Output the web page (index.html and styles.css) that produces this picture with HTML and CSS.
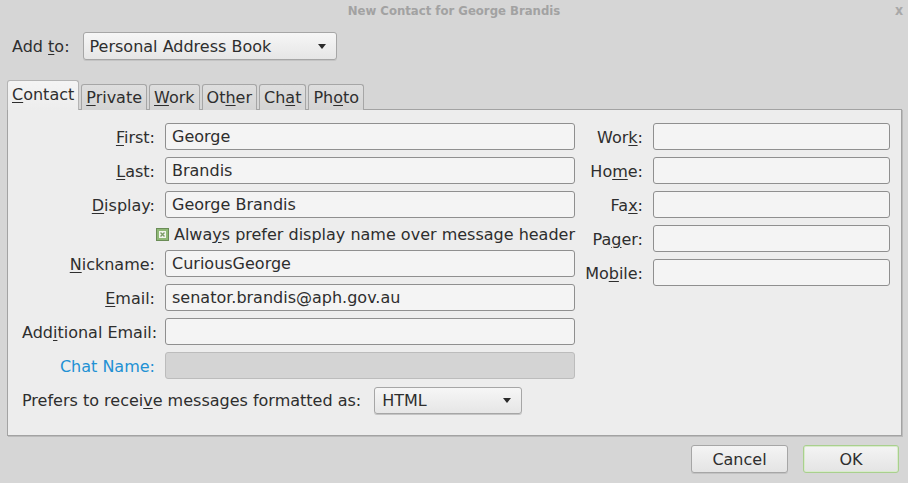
FILE: index.html
```html
<!DOCTYPE html>
<html lang="en">
<head>
    <meta charset="UTF-8">
    <title>New Contact for George Brandis</title>
    <link rel="stylesheet" href="styles.css">
</head>
<body>
    <div class="window">
        <div class="titlebar">
            <span></span>
            <span class="title">New Contact for George Brandis</span>
            <span class="close">x</span>
        </div>

        <div class="addto">
            <label>Add <u>t</u>o:</label>
            <div class="select book">
                <span>Personal Address Book</span>
                <span class="arrow"></span>
            </div>
        </div>

        <div class="tabs">
            <div class="tab active"><u>C</u>ontact</div>
            <div class="tab"><u>P</u>rivate</div>
            <div class="tab"><u>W</u>ork</div>
            <div class="tab">Ot<u>h</u>er</div>
            <div class="tab">Ch<u>a</u>t</div>
            <div class="tab">Ph<u>o</u>to</div>
        </div>

        <div class="panel">
            <div class="columns">
                <div class="grid names">
                    <label><u>F</u>irst:</label>
                    <div class="input">George</div>
                    <label><u>L</u>ast:</label>
                    <div class="input">Brandis</div>
                    <label><u>D</u>isplay:</label>
                    <div class="input">George Brandis</div>
                    <div class="check">
                        <svg width="13" height="13" viewBox="0 0 13 13">
                            <rect x="0.5" y="0.5" width="12" height="12" fill="#8fb876" stroke="#6a8c56"/>
                            <rect x="3" y="3" width="7" height="7" fill="#f2f5ee"/>
                            <path d="M4.5 4.5 L8.5 8.5 M8.5 4.5 L4.5 8.5" stroke="#7a9a66" stroke-width="1.4"/>
                        </svg>
                        <span>Alwa<u>y</u>s prefer display name over message header</span>
                    </div>
                    <label><u>N</u>ickname:</label>
                    <div class="input">CuriousGeorge</div>
                    <label><u>E</u>mail:</label>
                    <div class="input">senator.brandis@aph.gov.au</div>
                    <label>Add<u>i</u>tional Email:</label>
                    <div class="input"></div>
                    <label class="disabled">Chat Name:</label>
                    <div class="input off"></div>
                </div>

                <div class="grid phones">
                    <label>Wor<u>k</u>:</label>
                    <div class="input"></div>
                    <label>Ho<u>m</u>e:</label>
                    <div class="input"></div>
                    <label>Fa<u>x</u>:</label>
                    <div class="input"></div>
                    <label>Pa<u>g</u>er:</label>
                    <div class="input"></div>
                    <label>Mo<u>b</u>ile:</label>
                    <div class="input"></div>
                </div>
            </div>

            <div class="prefers">
                <label>Prefers to recei<u>v</u>e messages formatted as:</label>
                <div class="select format">
                    <span>HTML</span>
                    <span class="arrow"></span>
                </div>
            </div>
        </div>

        <div class="buttons">
            <button class="btn">Cancel</button>
            <button class="btn default">OK</button>
        </div>
    </div>
</body>
</html>
```

FILE: styles.css
```css
body {
    margin: 0;
    padding: 0;
    background: #d6d6d6;
    font-family: "DejaVu Sans", Verdana, sans-serif;
    font-size: 16px;
    color: #2e2e2e;
}
u {
    text-decoration-thickness: 1px;
    text-underline-offset: 2px;
}
.window {
    width: 908px;
    height: 483px;
    overflow: hidden;
}
.titlebar {
    height: 20px;
    display: grid;
    grid-template-columns: 1fr auto 1fr;
    align-items: center;
}
.title {
    font-family: "DejaVu Sans Condensed", "DejaVu Sans", sans-serif;
    font-weight: bold;
    font-size: 13px;
    color: #a2a2a2;
}
.close {
    justify-self: end;
    margin-right: 5px;
    font-family: "DejaVu Sans Condensed", "DejaVu Sans", sans-serif;
    font-weight: bold;
    font-size: 14px;
    color: #a8a8a8;
}
.addto {
    display: flex;
    align-items: center;
    margin: 12px 0 0 12px;
    gap: 13px;
}
.select {
    display: flex;
    align-items: center;
    justify-content: space-between;
    box-sizing: border-box;
    height: 28px;
    padding: 0 10px 0 6px;
    border: 1px solid #a6a6a6;
    border-radius: 3px;
    background: linear-gradient(#f6f6f6, #e6e6e6);
    box-shadow: 0 1px 0 #c4c4c4;
}
.select.book {
    width: 254px;
}
.select.format {
    width: 148px;
    height: 27px;
    padding-left: 7px;
}
.arrow {
    width: 0;
    height: 0;
    border-left: 4px solid transparent;
    border-right: 4px solid transparent;
    border-top: 5px solid #2a2a2a;
}
.tabs {
    display: flex;
    align-items: flex-end;
    gap: 2px;
    height: 29px;
    margin: 21px 0 -1px 7px;
}
.tab {
    box-sizing: border-box;
    height: 26px;
    padding: 0 4px;
    line-height: 25px;
    border: 1px solid #a6a6a6;
    border-bottom: none;
    border-radius: 3px 3px 0 0;
    background: linear-gradient(#dedede, #d4d4d4);
}
.tab.active {
    position: relative;
    z-index: 1;
    height: 30px;
    line-height: 28px;
    background: linear-gradient(#f4f4f4, #ededed);
    border-color: #b4b4b4;
}
.panel {
    box-sizing: border-box;
    height: 327px;
    margin: 0 6px 0 7px;
    padding: 13px 11px 0 14px;
    background: #ededed;
    border: 1px solid #a3a3a3;
    box-shadow: 1px 1px 0 #bbbbbb;
}
.columns {
    display: flex;
    gap: 10px;
}
.grid {
    display: grid;
    column-gap: 10px;
    row-gap: 7px;
    align-items: center;
    grid-auto-rows: 27px;
}
.names {
    grid-template-columns: 133px 410px;
    grid-template-rows: 27px 27px 27px 18px;
}
.phones {
    grid-template-columns: 58px 237px;
}
.grid label {
    text-align: right;
    white-space: nowrap;
    padding-top: 1px;
}
.grid label.disabled {
    color: #2291d4;
}
.input {
    box-sizing: border-box;
    height: 27px;
    padding: 0 6px;
    line-height: 26px;
    background: #f4f4f4;
    border: 1px solid #8f8f8f;
    border-radius: 3px;
    white-space: nowrap;
}
.input.off {
    background: #d4d4d4;
    border-color: #bcbcbc;
}
.check {
    grid-column: 2;
    height: 18px;
    justify-self: end;
    display: flex;
    align-items: center;
    gap: 5px;
    white-space: nowrap;
}
.prefers {
    display: flex;
    align-items: center;
    gap: 13px;
    margin-top: 8px;
}
.buttons {
    display: flex;
    justify-content: flex-end;
    gap: 15px;
    margin: 9px 9px 0 0;
}
.btn {
    box-sizing: border-box;
    width: 97px;
    height: 28px;
    font-family: "DejaVu Sans", Verdana, sans-serif;
    font-size: 16px;
    color: #2e2e2e;
    background: linear-gradient(#f4f4f4, #e4e4e4);
    border: 1px solid #a6a6a6;
    border-radius: 3px;
    box-shadow: 0 1px 0 #c2c2c2;
}
.btn.default {
    width: 96px;
    border-color: #a9d08e;
    box-shadow: inset 0 0 0 1px #d9ebcc;
}
```
